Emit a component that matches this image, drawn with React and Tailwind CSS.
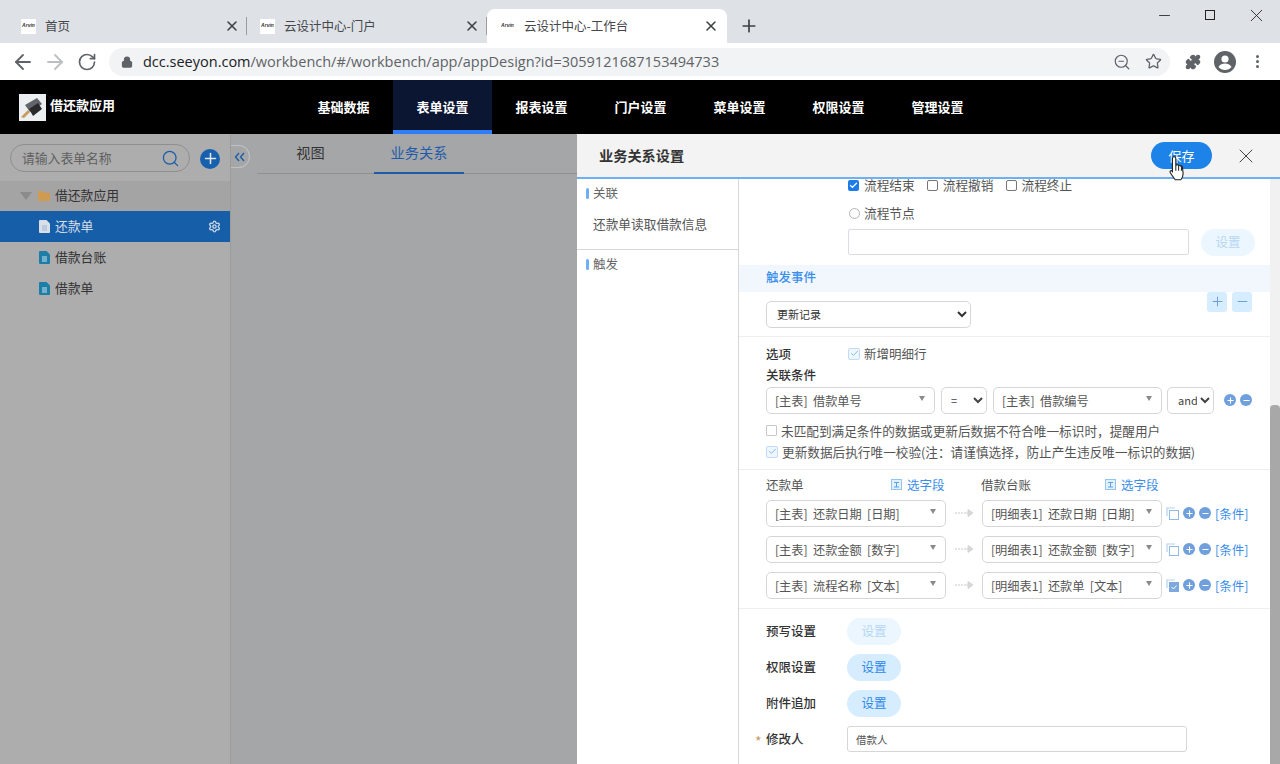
import React from 'react';
import { ArrowLeft, ArrowRight, RotateCw, Lock, ZoomOut, Star, Puzzle, X, Plus, Minus, Search, Settings, Check } from 'lucide-react';

const cn = "font-['Noto_Sans_CJK_SC','Noto_Sans',sans-serif]";

const Favicon = () => (
    <div className="w-[15px] h-[15px] bg-white flex items-center justify-center overflow-hidden shrink-0">
        <span className="text-[5px] italic font-bold text-[#333] font-['Liberation_Sans',sans-serif]">Arvin</span>
    </div>
);

const Tab = ({ title, active, className }) => (
    <div className={active
        ? 'w-[240px] h-[34px] bg-white rounded-t-[8px] flex items-center pl-[13px] pr-[8px] relative'
        : `h-[34px] flex items-center pl-[13px] pr-[7px] relative ${className}`}>
        <Favicon />
        <span className="ml-[9px] text-[12.5px] text-[#45474a] flex-1 truncate">{title}</span>
        <X size={16} strokeWidth={2.3} className="text-[#3c4043]" />
        {!active && <span className="absolute right-0 top-[8px] h-[18px] border-r border-[#9a9ca0]" />}
    </div>
);

const NavItem = ({ children, active }) => (
    <div className={active
        ? 'w-[99px] h-full flex items-center justify-center bg-[#0b1633] border-b-[4px] border-[#2e7cf6] text-white text-[13px] font-bold pt-[3px]'
        : 'w-[99px] h-full flex items-center justify-center text-white text-[13px] font-bold pb-[1px]'}>
        {children}
    </div>
);

const FormIcon = ({ className, light }) => (
    <svg width="11" height="13" viewBox="0 0 11 13" className={className}>
        <path d="M1 0h6.5L11 3.5V12a1 1 0 0 1-1 1H1a1 1 0 0 1-1-1V1a1 1 0 0 1 1-1z" fill={light ? '#d8dfe9' : '#1d7fa8'} />
        <path d="M3 6h5M3 8h5M3 10h5" stroke={light ? '#9fb6d0' : '#cfe0ea'} strokeWidth="1" />
    </svg>
);

const Box = ({ checked, soft }) => {
    if (soft) {
        return (
            <span className="w-[12px] h-[12px] border border-[#c3dcf5] bg-[#eef6fe] rounded-[2px] flex items-center justify-center shrink-0">
                {checked && <Check size={9} strokeWidth={2} className="text-[#6aa6e6]" />}
            </span>
        );
    }
    if (checked) {
        return (
            <span className="w-[11px] h-[11px] bg-[#1e7ce8] rounded-[2px] flex items-center justify-center shrink-0">
                <Check size={9} strokeWidth={3.5} className="text-white" />
            </span>
        );
    }
    return <span className="w-[11px] h-[11px] border border-[#767676] bg-white rounded-[2px] shrink-0" />;
};

const CheckItem = ({ children, checked }) => (
    <label className="flex items-center gap-[5px] text-[12.7px] text-[#555] leading-none">
        <Box checked={checked} />
        <span>{children}</span>
    </label>
);

const FakeSelect = ({ children, className }) => (
    <div className={`h-[27px] border border-[#d6d6d6] rounded-[5px] bg-white flex items-center justify-between pl-[8px] pr-[9px] text-[12.2px] text-[#555] ${className}`}>
        <span className="whitespace-nowrap mt-[2px] [word-spacing:2.6px]">{children}</span>
        <span className="w-0 h-0 border-x-[3.5px] border-x-transparent border-t-[5px] border-t-[#8a8a8a] mb-[3px]" />
    </div>
);

const RoundBtn = ({ children, tone }) => (
    <button className={tone === 'off'
        ? 'w-[54px] h-[27px] rounded-full bg-[#ebf6ff] text-[#b7d7f3] text-[12.5px]'
        : 'w-[54px] h-[27px] rounded-full bg-[#d6edff] text-[#2f87ea] text-[12.5px]'}>
        {children}
    </button>
);

const MiniCircle = ({ plus }) => (
    <span className="w-[12px] h-[12px] rounded-full bg-[#6f9fdc] flex items-center justify-center shrink-0">
        {plus ? <Plus size={9} strokeWidth={3} className="text-white" /> : <Minus size={9} strokeWidth={3} className="text-white" />}
    </span>
);

const FieldPicker = () => (
    <span className="flex items-center gap-[5px] text-[12.5px] text-[#3a8eec]">
        <svg width="11" height="11" viewBox="0 0 11 11" fill="none">
            <rect x="0.5" y="0.5" width="10" height="10" fill="#e2f0fc" stroke="#93c5f0" />
            <path d="M3 3.5h5M5.5 3.500v4.500M3 8h5" stroke="#5ba2e8" />
        </svg>
        选字段
    </span>
);

const MappingRow = ({ left, right, checked }) => (
    <div className="flex items-center h-[27px]">
        <FakeSelect className="w-[180px]">{left}</FakeSelect>
        <svg width="36" height="10" viewBox="0 0 36 10" className="shrink-0">
            <path d="M9 5h11" stroke="#dcdcdc" strokeDasharray="2 1" strokeWidth="1.5" />
            <path d="M20 5h4M22 1.500L27 5l-5 3.500z" fill="#d6d6d6" stroke="#d6d6d6" />
        </svg>
        <FakeSelect className="w-[180px]">{right}</FakeSelect>
        <svg width="13" height="13" viewBox="0 0 13 13" fill="none" className="ml-[4px] shrink-0">
            <path d="M1 9V1h8" stroke="#b6d3ef" strokeWidth="1.2" />
            <rect x="3.5" y="3.5" width="9" height="9" fill={checked ? '#7fa9de' : '#fff'} stroke={checked ? '#7fa9de' : '#8dbcec'} />
            {checked && <path d="M5.500 8l2 2 3-3.500" stroke="#fff" />}
        </svg>
        <span className="ml-[4px] flex items-center gap-[4px]">
            <MiniCircle plus />
            <MiniCircle />
        </span>
        <span className="ml-[4px] mt-[2px] text-[12.5px] text-[#3a8eec] whitespace-nowrap">[条件]</span>
    </div>
);

const SettingRow = ({ label, tone }) => (
    <div className="flex items-center h-[27px]">
        <span className="w-[81px] text-[12.5px] font-medium text-[#333]">{label}</span>
        <RoundBtn tone={tone}>设置</RoundBtn>
    </div>
);

const App = () => {
    return (
        <div className={`w-[1280px] h-[764px] overflow-hidden flex flex-col relative bg-white ${cn}`}>
            {/* Browser tabs */}
            <div className="h-[43px] bg-[#dee1e6] flex items-end pl-[8px] relative shrink-0">
                <Tab title="首页" className="w-[239px]" />
                <Tab title="云设计中心-门户" className="w-[240px]" />
                <Tab title="云设计中心-工作台" active />
                <Plus size={20} strokeWidth={2} className="text-[#3c4043] ml-[12px] mb-[7px]" />
                <div className="absolute right-[1px] top-0 flex items-center h-[30px] text-[#222]">
                    <span className="w-[46px] flex justify-center"><Minus size={17} strokeWidth={1.2} /></span>
                    <span className="w-[46px] flex justify-center"><span className="w-[10px] h-[10px] border border-[#222]" /></span>
                    <span className="w-[46px] flex justify-center"><X size={21} strokeWidth={1} /></span>
                </div>
            </div>

            {/* Address bar */}
            <div className="h-[37px] bg-white flex items-center pl-[11px] shrink-0">
                <ArrowLeft size={24} strokeWidth={1.8} className="text-[#5f6368]" />
                <ArrowRight size={24} strokeWidth={1.8} className="text-[#bcbec1] ml-[8px]" />
                <RotateCw size={20} strokeWidth={2} className="text-[#5f6368] ml-[10px]" />
                <div className="ml-[12px] w-[1061px] h-[28px] rounded-full bg-[#f1f3f4] flex items-center pl-[12px] pr-[8px]">
                    <Lock size={12} strokeWidth={2.5} className="text-[#5f6368] fill-[#5f6368]" />
                    <span className="ml-[10px] text-[14.5px] text-[#5f6368] font-['Open_Sans',sans-serif] flex-1 whitespace-nowrap">
                        <span className="text-[#202124]">dcc.seeyon.com</span>/workbench/#/workbench/app/appDesign?id=3059121687153494733
                    </span>
                    <ZoomOut size={18} strokeWidth={1.6} className="text-[#5f6368]" />
                    <Star size={17} strokeWidth={1.8} className="text-[#5f6368] ml-[14px]" />
                </div>
                <Puzzle size={16} strokeWidth={2} className="text-[#5f6368] fill-[#5f6368] ml-[15px]" />
                <svg width="22" height="22" viewBox="0 0 22 22" className="ml-[13px] shrink-0">
                    <circle cx="11" cy="11" r="11" fill="#5f6368" />
                    <circle cx="11" cy="8" r="3.6" fill="#fff" />
                    <path d="M4.500 16c1.500-2.600 4-3.400 6.500-3.400s5 .8 6.500 3.400c-1.600 2-3.900 3-6.500 3s-4.900-1-6.500-3z" fill="#fff" />
                </svg>
                <div className="ml-[20px] flex flex-col gap-[2px]">
                    <span className="w-[3px] h-[3px] rounded-full bg-[#5f6368]" />
                    <span className="w-[3px] h-[3px] rounded-full bg-[#5f6368]" />
                    <span className="w-[3px] h-[3px] rounded-full bg-[#5f6368]" />
                </div>
            </div>

            {/* App nav */}
            <div className="h-[54px] bg-black flex items-center shrink-0 pl-[19px]">
                <div className="w-[275px] flex items-center gap-[4px]">
                    <svg width="27" height="27" viewBox="0 0 27 27" className="shrink-0">
                        <rect width="27" height="27" fill="#eceff1" />
                        <path d="M6 11l12-7 5 6-12 8z" fill="#62666c" />
                        <path d="M10 15l9-6 4 6-9 7z" fill="#2a2a2c" />
                        <path d="M2 23l7-7 2 2-6 6z" fill="#c99a5a" />
                    </svg>
                    <span className="text-white text-[13px] font-bold mb-[4px]">借还款应用</span>
                </div>
                <NavItem>基础数据</NavItem>
                <NavItem active>表单设置</NavItem>
                <NavItem>报表设置</NavItem>
                <NavItem>门户设置</NavItem>
                <NavItem>菜单设置</NavItem>
                <NavItem>权限设置</NavItem>
                <NavItem>管理设置</NavItem>
            </div>

            <div className="flex flex-1 min-h-0">
                {/* Sidebar, dimmed by the drawer's mask */}
                <div className="w-[230px] bg-[#adadae] shrink-0 flex flex-col">
                    <div className="h-[47px] flex items-center pl-[10px] shrink-0">
                        <div className="w-[180px] h-[28px] mt-[1px] rounded-full border border-[#8f8f90] flex items-center pl-[11px] pr-[9px] justify-between">
                            <span className="text-[12.8px] text-[#5f5f5f]">请输入表单名称</span>
                            <Search size={19} strokeWidth={1.6} className="text-[#1c5ea6]" />
                        </div>
                        <span className="ml-[10px] mt-[2px] w-[20px] h-[20px] rounded-full bg-[#1760ae] flex items-center justify-center">
                            <Plus size={17} strokeWidth={2.2} className="text-[#e4e4e4]" />
                        </span>
                    </div>
                    <div className="h-[30px] bg-[#a4a4a5] flex items-center pl-[20px] text-[12.8px] text-[#333]">
                        <span className="w-0 h-0 border-x-[6px] border-x-transparent border-t-[8px] border-t-[#8b8b8b]" />
                        <svg width="12" height="10" viewBox="0 0 12 10" className="ml-[6px] mr-[5px]">
                            <path d="M0 1a1 1 0 0 1 1-1h3l1.500 1.500H11a1 1 0 0 1 1 1V9a1 1 0 0 1-1 1H1a1 1 0 0 1-1-1z" fill="#cf9a52" />
                        </svg>
                        <span className="mb-[2px]">借还款应用</span>
                    </div>
                    <div className="h-[31px] bg-[#175ea8] flex items-center pl-[39px] pr-[9px] text-[12.8px] text-[#d4dce6]">
                        <FormIcon light className="mr-[5px]" />
                        <span className="flex-1 mb-[2px]">还款单</span>
                        <Settings size={13} strokeWidth={2.6} className="text-[#c5d3e4]" />
                    </div>
                    <div className="h-[31px] flex items-center pl-[39px] text-[12.8px] text-[#333]">
                        <FormIcon className="mr-[5px]" />
                        <span className="mb-[2px]">借款台账</span>
                    </div>
                    <div className="h-[31px] flex items-center pl-[39px] text-[12.8px] text-[#333]">
                        <FormIcon className="mr-[5px]" />
                        <span className="mb-[2px]">借款单</span>
                    </div>
                </div>

                {/* Dimmed middle area */}
                <div className="w-[347px] bg-[#a5a6a8] shrink-0 flex items-start pt-[11px] border-l border-[#9b9b9d]">
                    <span className="w-[19px] h-[23px] border border-l-0 border-[#c0c0c2] rounded-r-full flex items-center justify-center text-[#1c5ea6] shrink-0">
                        <svg width="12" height="10" viewBox="0 0 12 10" fill="none" stroke="currentColor" strokeWidth="1.4">
                            <path d="M5 1L1.500 5 5 9M10 1L6.500 5 10 9" />
                        </svg>
                    </span>
                    <div className="ml-[7px] -mt-[11px] flex-1 h-[40px] border-b border-[#8f9092] flex text-[14.2px]">
                        <div className="w-[107px] h-full flex items-center justify-center text-[#333] pb-[1px]">视图</div>
                        <div className="ml-[10px] w-[90px] h-[40px] flex items-center justify-center text-[#1f5ba8] border-b-[2px] border-[#1f5ba8] pb-[1px]">业务关系</div>
                    </div>
                </div>

                {/* Drawer */}
                <div className="w-[703px] bg-white flex flex-col min-h-0">
                    <div className="h-[45px] bg-[#f3f3f3] border-b-2 border-[#6db0f3] flex items-center pl-[22px] pr-[22px] shrink-0">
                        <span className="text-[14.2px] font-bold text-[#333] flex-1">业务关系设置</span>
                        <button className="w-[61px] h-[27px] rounded-full bg-[#1e83e8] text-white text-[13px]">保存</button>
                        <X size={24} strokeWidth={1} className="text-[#444] ml-[22px]" />
                    </div>
                    <div className="flex flex-1 min-h-0">
                        <div className="w-[162px] border-r border-[#d8d8d8] shrink-0">
                            <div className="h-[71px] border-b border-[#d8d8d8]">
                                <div className="h-[28px] flex items-center pl-[9px] text-[12.5px] text-[#666] gap-[4px]">
                                    <span className="w-[3px] h-[11px] rounded-full bg-[#6db0f3]" />关联
                                </div>
                                <div className="pl-[16px] mt-[7px] text-[12.7px] text-[#555]">还款单读取借款信息</div>
                            </div>
                            <div className="h-[28px] flex items-center pl-[9px] text-[12.5px] text-[#666] gap-[4px]">
                                <span className="w-[3px] h-[11px] rounded-full bg-[#6db0f3]" />触发
                            </div>
                        </div>

                        <div className="flex-1 min-w-0">
                            <div className="h-[13px] pl-[109px] flex items-center gap-[12px]">
                                <CheckItem checked>流程结束</CheckItem>
                                <CheckItem>流程撤销</CheckItem>
                                <CheckItem>流程终止</CheckItem>
                            </div>
                            <div className="mt-[14px] h-[14px] pl-[110px] flex items-center gap-[4px] text-[12.7px] text-[#555]">
                                <span className="w-[11px] h-[11px] rounded-full border border-[#b5b5b5]" />
                                <span className="mb-[1px]">流程节点</span>
                            </div>
                            <div className="mt-[8px] pl-[109px] flex items-center">
                                <div className="w-[341px] h-[26px] border border-[#dcdde3] rounded-[2px]" />
                                <div className="ml-[12px]"><RoundBtn tone="off">设置</RoundBtn></div>
                            </div>
                            <div className="mt-[9px] h-[27px] bg-[#f2f7fe] flex items-center pl-[27px] pb-[2px] text-[12.5px] font-medium text-[#3a8eec]">触发事件</div>
                            <div className="h-[45px] pl-[27px] pr-[18px] flex items-start justify-between border-b border-[#eee]">
                                <select className="mt-[9px] w-[205px] h-[27px] border border-[#d6d6d6] rounded-[5px] bg-white pl-[6px] text-[11px] text-[#333] appearance-auto" defaultValue="更新记录">
                                    <option>更新记录</option>
                                </select>
                                <div className="flex gap-[5px]">
                                    <span className="w-[20px] h-[20px] rounded-[3px] bg-[#d6edff] flex items-center justify-center"><Plus size={15} strokeWidth={1.6} className="text-[#6f9fd6]" /></span>
                                    <span className="w-[20px] h-[20px] rounded-[3px] bg-[#d6edff] flex items-center justify-center"><Minus size={15} strokeWidth={1.6} className="text-[#6f9fd6]" /></span>
                                </div>
                            </div>

                            <div className="pl-[27px] pr-[18px] h-[133px] border-b border-[#eee]">
                                <div className="pt-[6px] h-[28px] flex items-center text-[12.5px]">
                                    <span className="w-[82px] font-medium text-[#333]">选项</span>
                                    <Box checked soft />
                                    <span className="ml-[4px] text-[#555]">新增明细行</span>
                                </div>
                                <div className="h-[18px] mt-[1px] flex items-center text-[12.5px] font-medium text-[#333]">关联条件</div>
                                <div className="mt-[3px] flex items-center">
                                    <FakeSelect className="w-[169px]">[主表] 借款单号</FakeSelect>
                                    <select className="ml-[6px] w-[46px] h-[27px] border border-[#d6d6d6] rounded-[5px] bg-white pl-[5px] text-[11px] text-[#444] appearance-auto" defaultValue="=">
                                        <option>=</option>
                                    </select>
                                    <FakeSelect className="ml-[6px] w-[169px]">[主表] 借款编号</FakeSelect>
                                    <select className="ml-[5px] w-[47px] h-[27px] border border-[#d6d6d6] rounded-[5px] bg-white pl-[6px] text-[11px] text-[#444] appearance-auto" defaultValue="and">
                                        <option>and</option>
                                    </select>
                                    <span className="ml-[10px] flex gap-[4px]"><MiniCircle plus /><MiniCircle /></span>
                                </div>
                                <div className="mt-[10px] h-[14px] flex items-center gap-[4px] text-[12.65px] text-[#555] whitespace-nowrap">
                                    <span className="w-[11px] h-[11px] border border-[#c8c8c8] rounded-[1px] shrink-0" />
                                    <span>未匹配到满足条件的数据或更新后数据不符合唯一标识时，提醒用户</span>
                                </div>
                                <div className="mt-[7px] h-[14px] flex items-center gap-[4px] text-[12.65px] text-[#555] whitespace-nowrap">
                                    <Box checked soft />
                                    <span>更新数据后执行唯一校验(注：请谨慎选择，防止产生违反唯一标识的数据)</span>
                                </div>
                            </div>

                            <div className="pl-[27px] h-[139px] border-b border-[#eee]">
                                <div className="h-[30px] flex items-center text-[12.5px] text-[#555]">
                                    <span className="w-[125px]">还款单</span>
                                    <span className="w-[90px]"><FieldPicker /></span>
                                    <span className="w-[124px]">借款台账</span>
                                    <FieldPicker />
                                </div>
                                <div className="flex flex-col gap-[9px]">
                                    <MappingRow left="[主表] 还款日期 [日期]" right="[明细表1] 还款日期 [日期]" />
                                    <MappingRow left="[主表] 还款金额 [数字]" right="[明细表1] 还款金额 [数字]" />
                                    <MappingRow left="[主表] 流程名称 [文本]" right="[明细表1] 还款单 [文本]" checked />
                                </div>
                            </div>

                            <div className="pl-[27px] pt-[9px] flex flex-col gap-[9px]">
                                <SettingRow label="预写设置" tone="off" />
                                <SettingRow label="权限设置" />
                                <SettingRow label="附件追加" />
                                <div className="flex items-center h-[27px] relative">
                                    <span className="absolute -left-[11px] top-[5px] text-[14px] leading-[20px] text-[#c89a66]">*</span>
                                    <span className="w-[81px] text-[12.5px] font-medium text-[#333]">修改人</span>
                                    <div className="w-[340px] h-[26px] border border-[#d6d6d6] rounded-[3px] pl-[8px] flex items-center text-[10.5px] text-[#555]">借款人</div>
                                </div>
                            </div>
                        </div>

                        {/* Scrollbar */}
                        <div className="w-[10px] bg-[#f1f1f1] shrink-0 flex flex-col justify-end">
                            <div className="h-[359px] bg-[#a8a8a8] rounded-t-[4px]" />
                        </div>
                    </div>
                </div>
            </div>

            {/* Mouse pointer over the save button */}
            <svg width="19" height="27" viewBox="0 0 16 24" className="absolute left-[1168px] top-[155px]">
                <path d="M5 1.500c1 0 1.500.7 1.500 1.500v6l1-.2c.6-.2 1.200 0 1.500.5.600-.3 1.300-.1 1.600.5.700-.3 1.400 0 1.700.6l.7 6c0 2-.8 4-2 5.600H6c-1.500-2-3-4-4.500-6.500-.5-1 .6-2 1.500-1.300l.5.500V3c0-.8.500-1.500 1.500-1.500z" fill="#fff" stroke="#222" strokeWidth="1" />
                <path d="M6.500 9v5M9 9.500V14M11.500 10v4" stroke="#222" strokeWidth="0.9" />
            </svg>
        </div>
    );
};

export default App;
